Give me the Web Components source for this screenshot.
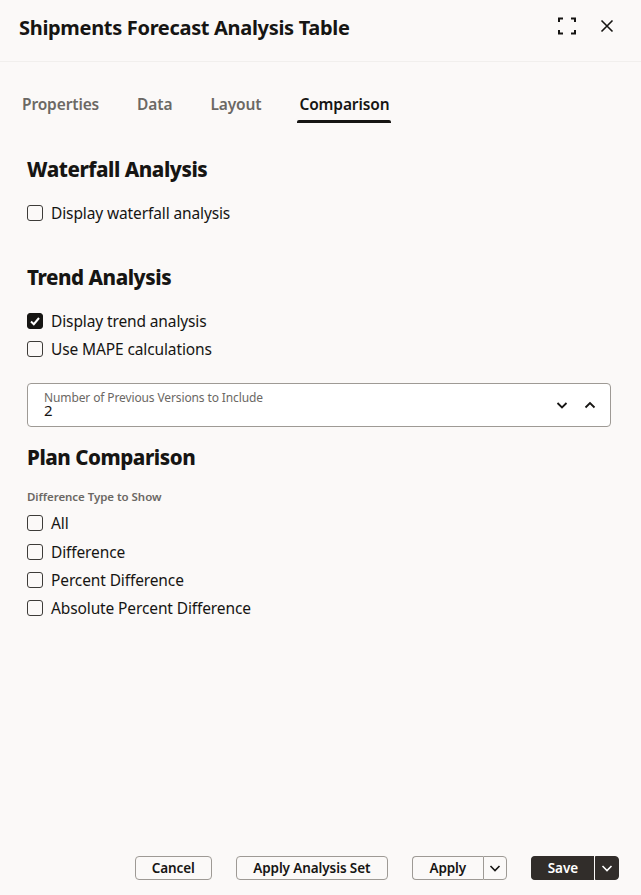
<!DOCTYPE html>
<html lang="en">
<head>
<meta charset="utf-8">
<title>Shipments Forecast Analysis Table</title>
<style>
html,body{margin:0;padding:0;height:100%;}
body{background:#fbf9f8;color:#161513;font-family:"Noto Sans","Open Sans",sans-serif;}
</style>
</head>
<body>
<panel-dialog>
  <span slot="title">Shipments Forecast Analysis Table</span>
  <tab-bar slot="tabs"></tab-bar>
  <form-section title="Waterfall Analysis" style="--after:4px">
    <check-row>Display waterfall analysis</check-row>
  </form-section>
  <form-section title="Trend Analysis" style="--after:20px;--row:28px">
    <check-row checked>Display trend analysis</check-row>
    <check-row>Use MAPE calculations</check-row>
  </form-section>
  <number-field label="Number of Previous Versions to Include" value="2"></number-field>
  <form-section title="Plan Comparison" sublabel="Difference Type to Show" style="--after:0px">
    <check-row>All</check-row>
    <check-row>Difference</check-row>
    <check-row>Percent Difference</check-row>
    <check-row>Absolute Percent Difference</check-row>
  </form-section>
  <action-btn slot="footer" style="width:76px;margin-right:1px">Cancel</action-btn>
  <action-btn slot="footer" style="width:152px">Apply Analysis Set</action-btn>
  <action-btn slot="footer" split style="width:95px">Apply</action-btn>
  <action-btn slot="footer" split primary>Save</action-btn>
</panel-dialog>
<script>
class PanelDialog extends HTMLElement {
    constructor(){
        super();
        this.attachShadow({mode:'open'});
        this.shadowRoot.innerHTML = `
        <style>
            :host{display:flex;flex-direction:column;height:895px;box-sizing:border-box;}
            header{display:flex;align-items:center;height:62px;box-sizing:border-box;padding:0 27px 0 19px;border-bottom:1px solid #f1efed;}
            h1{flex:1;margin:-6px 0 0;font-size:20px;font-weight:700;letter-spacing:-.32px;}
            .icons{display:flex;align-items:center;gap:24px;margin-top:-9px;}
            svg{display:block;}
            main{flex:1;padding:0 30px 0 27px;}
            footer{display:flex;justify-content:flex-end;align-items:center;gap:24px;padding:0 22px 15px 0;}
        </style>
        <header>
            <h1><slot name="title"></slot></h1>
            <div class="icons">
                <svg width="18" height="18" viewBox="0 0 18 18" fill="none" stroke="#161513" stroke-width="2"><path d="M1 5V1.5H5M13 1.5H17V5M17 13V16.5H13M5 16.5H1V13"/></svg>
                <svg width="14" height="14" viewBox="0 0 14 14" fill="none" stroke="#161513" stroke-width="1.6"><path d="M1.5 1.5L12.5 12.5M12.5 1.5L1.5 12.5"/></svg>
            </div>
        </header>
        <slot name="tabs"></slot>
        <main><slot></slot></main>
        <footer><slot name="footer"></slot></footer>
        `;
    }
}
class TabBar extends HTMLElement {
    constructor(){
        super();
        this.attachShadow({mode:'open'});
        this.shadowRoot.innerHTML = `
        <style>
            :host{display:flex;gap:38px;padding:29px 0 0 22px;height:32px;}
            span{position:relative;font-size:15.5px;font-weight:600;color:#6b6864;letter-spacing:-.13px;line-height:26px;}
            .on{color:#161513;}
            .on::after{content:"";position:absolute;left:-2px;right:-2px;top:29px;height:3px;background:#161513;border-radius:2px 2px 0 0;}
        </style>
        <span>Properties</span><span>Data</span><span>Layout</span><span class="on">Comparison</span>
        `;
    }
}
class FormSection extends HTMLElement {
    constructor(){
        super();
        this.attachShadow({mode:'open'});
        const sub = this.getAttribute('sublabel');
        this.shadowRoot.innerHTML = `
        <style>
            :host{display:block;margin-bottom:var(--after,0);}
            h2{margin:0;padding-top:31px;font-size:20.5px;line-height:30px;font-weight:800;letter-spacing:-.45px;}
            :host([sublabel]) h2{padding-top:15px;}
            .sub{margin-top:17px;font-size:11.5px;line-height:16px;font-weight:600;color:#6b6864;letter-spacing:-.05px;}
            .rows{margin-top:15px;}
            :host([sublabel]) .rows{margin-top:4px;}
        </style>
        <h2>${this.getAttribute('title')}</h2>
        ${sub ? `<div class="sub">${sub}</div>` : ''}
        <div class="rows"><slot></slot></div>
        `;
    }
}
class CheckRow extends HTMLElement {
    constructor(){
        super();
        this.attachShadow({mode:'open'});
        const on = this.hasAttribute('checked');
        this.shadowRoot.innerHTML = `
        <style>
            :host{display:flex;align-items:center;gap:8px;height:var(--row,28.3px);font-size:15.5px;letter-spacing:-.12px;}
            .box{width:16px;height:16px;box-sizing:border-box;border:1.5px solid #3d3b38;border-radius:3px;display:flex;align-items:center;justify-content:center;}
            .box.on{background:#161513;border-color:#161513;}
        </style>
        <span class="box ${on ? 'on' : ''}">${on ? '<svg width="12" height="12" viewBox="0 0 12 12" fill="none" stroke="#fff" stroke-width="2"><path d="M2 6.5L4.8 9.2L10 3"/></svg>' : ''}</span>
        <span><slot></slot></span>
        `;
    }
}
class NumberField extends HTMLElement {
    constructor(){
        super();
        this.attachShadow({mode:'open'});
        this.shadowRoot.innerHTML = `
        <style>
            :host{display:flex;align-items:center;height:44px;box-sizing:border-box;background:#fff;border:1px solid #9e9a95;border-radius:4px;padding:0 13px 0 16px;}
            .txt{flex:1;padding-bottom:3px;}
            label{display:block;font-size:12px;line-height:13px;color:#6b6864;letter-spacing:-.12px;}
            .val{font-size:15px;line-height:13px;}
            .btns{display:flex;gap:14px;}
            svg{display:block;}
        </style>
        <div class="txt"><label>${this.getAttribute('label')}</label><div class="val">${this.getAttribute('value')}</div></div>
        <div class="btns">
            <svg width="14" height="14" viewBox="0 0 14 14" fill="none" stroke="#161513" stroke-width="1.8"><path d="M2.5 5L7 9.5L11.5 5"/></svg>
            <svg width="14" height="14" viewBox="0 0 14 14" fill="none" stroke="#161513" stroke-width="1.8"><path d="M2.5 9.5L7 5L11.5 9.5"/></svg>
        </div>
        `;
    }
}
class ActionBtn extends HTMLElement {
    constructor(){
        super();
        this.attachShadow({mode:'open'});
        const split = this.hasAttribute('split');
        this.shadowRoot.innerHTML = `
        <style>
            :host{display:inline-flex;height:24px;font-size:13.5px;font-weight:600;letter-spacing:-.1px;color:#161513;}
            div{display:flex;align-items:center;justify-content:center;box-sizing:border-box;height:24px;background:#fbf9f8;border:1px solid #9e9a95;border-radius:4px;padding:0 16px;}
            .main{flex:1;}
            :host([split]) .main{border-radius:4px 0 0 4px;border-right:0;}
            .caret{width:24px;padding:0;border-radius:0 4px 4px 0;}
            :host([primary]){color:#fff;}
            :host([primary]) div{background:#312d2a;border-color:#312d2a;}
            :host([primary]) .caret{margin-left:1px;}
            svg{display:block;stroke:currentColor;}
        </style>
        <div class="main"><slot></slot></div>
        ${split ? '<div class="caret"><svg width="12" height="12" viewBox="0 0 12 12" fill="none" stroke-width="1.6"><path d="M1.5 4L6 8.5L10.5 4"/></svg></div>' : ''}
        `;
    }
}
customElements.define('panel-dialog', PanelDialog);
customElements.define('tab-bar', TabBar);
customElements.define('form-section', FormSection);
customElements.define('check-row', CheckRow);
customElements.define('number-field', NumberField);
customElements.define('action-btn', ActionBtn);
</script>
</body>
</html>
